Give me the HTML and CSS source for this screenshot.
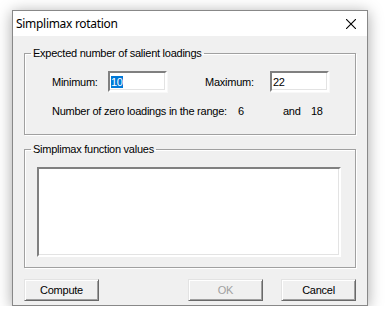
FILE: index.html
```html
<!DOCTYPE html>
<html>
<head>
  <title>Simplimax rotation</title>
  <link rel="stylesheet" href="styles.css">
</head>
<body>
  <div class="window">
    <div class="titlebar">
      <span class="title">Simplimax rotation</span>
      <svg class="close" width="10" height="10" viewBox="0 0 10 10">
        <path d="M0 0 L10 10 M10 0 L0 10" stroke="#000" stroke-width="1.1" fill="none"/>
      </svg>
    </div>
    <div class="content">
      <fieldset class="group group-loadings">
        <legend>Expected number of salient loadings</legend>
        <div class="row row-inputs">
          <span class="lbl lbl-min">Minimum:</span>
          <span class="field"><span class="sel">10</span></span>
          <span class="lbl lbl-max">Maximum:</span>
          <span class="field">22</span>
        </div>
        <div class="row row-range">
          <span class="range-text">Number of zero loadings in the range:</span>
          <span class="range-lo">6</span>
          <span class="range-and">and</span>
          <span>18</span>
        </div>
      </fieldset>
      <fieldset class="group group-values">
        <legend>Simplimax function values</legend>
        <div class="listbox"></div>
      </fieldset>
      <div class="buttons">
        <button class="btn">Compute</button>
        <button class="btn btn-ok" disabled>OK</button>
        <button class="btn">Cancel</button>
      </div>
    </div>
  </div>
</body>
</html>
```

FILE: styles.css
```css
/* dialog window */
body {
  margin: 0;
  padding: 0;
  background: #fff;
  font-family: "Liberation Sans", Arial, sans-serif;
  font-size: 11px;
  letter-spacing: -0.25px;
  color: #000;
}
.window {
  margin: 10px 0 0 12px;
  width: 354px;
  height: 294px;
  border: 1px solid #888;
  background: #f0f0f0;
  box-shadow: 0 2px 14px rgba(0, 0, 0, 0.35);
}
.titlebar {
  height: 25px;
  background: #fff;
  display: flex;
  align-items: center;
  justify-content: space-between;
  padding: 0 11px 0 3px;
}
.title {
  font-family: "Noto Sans", sans-serif;
  font-size: 12px;
  letter-spacing: -0.3px;
}
.content {
  padding-top: 11px;
}

/* group boxes */
.group {
  margin: 0 11px;
  padding: 0;
  border: 1px solid #a0a0a0;
  box-shadow: inset 1px 1px 0 #fff, 1px 1px 0 #fff;
}
.group legend {
  margin-left: 6px;
  padding: 0 2px;
}
.group-loadings {
  padding-bottom: 16px;
}
.group-values {
  margin-top: 8px;
  padding-bottom: 10px;
}
.row {
  display: flex;
  align-items: center;
  padding-left: 27px;
}
.row-inputs {
  margin-top: 12px;
  height: 21px;
}
.row-range {
  margin-top: 12px;
  height: 14px;
}
.lbl-min {
  width: 56px;
}
.lbl-max {
  width: 65px;
  margin-left: 38px;
}
.field {
  box-sizing: border-box;
  width: 59px;
  height: 21px;
  background: #fff;
  border-style: solid;
  border-width: 2px;
  border-color: #808080 #fff #fff #808080;
  box-shadow: inset -1px -1px 0 #e3e3e3, 1px 1px 0 #f8f8f8;
  padding: 2px 0 0 1px;
  line-height: 14px;
}
.sel {
  background: #0078d7;
  color: #fff;
}
.range-text {
  width: 186px;
}
.range-lo {
  width: 45px;
}
.range-and {
  width: 28px;
}
.listbox {
  box-sizing: border-box;
  margin: 12px 0 0 12px;
  width: 304px;
  height: 90px;
  background: #fff;
  border-style: solid;
  border-width: 2px;
  border-color: #808080 #fff #fff #808080;
  box-shadow: inset -1px -1px 0 #e3e3e3;
}

/* buttons */
.buttons {
  display: flex;
  margin: 11px 11px 0 11px;
}
.btn {
  box-sizing: border-box;
  width: 75px;
  height: 22px;
  font-family: "Liberation Sans", Arial, sans-serif;
  font-size: 11px;
  letter-spacing: -0.25px;
  color: #000;
  background: #f0f0f0;
  border-style: solid;
  border-width: 1px;
  border-color: #e3e3e3 #696969 #696969 #e3e3e3;
  box-shadow: inset 1px 1px 0 #fff, inset -1px -1px 0 #a0a0a0;
  padding: 0;
}
.btn-ok {
  margin-left: auto;
  margin-right: 18px;
  color: #a0a0a0;
}
```
